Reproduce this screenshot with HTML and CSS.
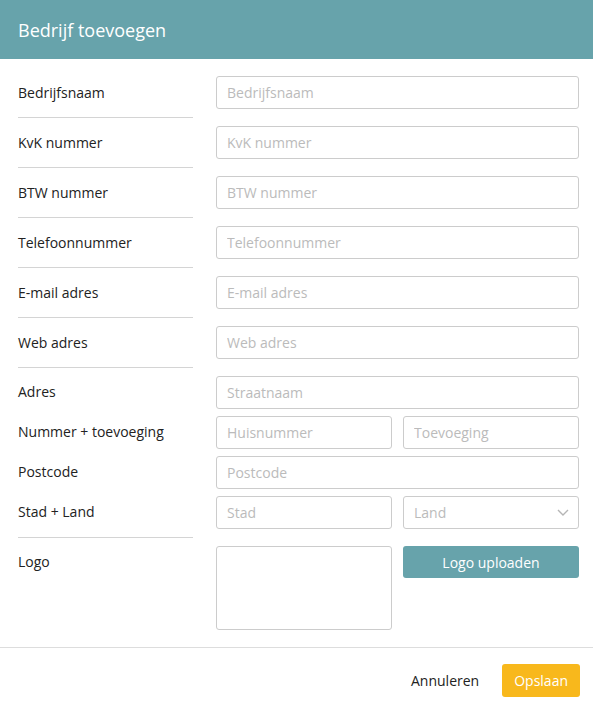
FILE: index.html
```html
<!DOCTYPE html>
<html lang="nl">
<head>
  <meta charset="UTF-8" />
  <meta name="viewport" content="width=device-width, initial-scale=1.0" />
  <title>Bedrijf toevoegen</title>
  <link rel="stylesheet" href="styles.css">
</head>
<body>

  <div class="modal">
    <!-- Header -->
    <div class="modal-header">Bedrijf toevoegen</div>

    <!-- Form -->
    <form class="modal-body">
      <div class="form-row">
        <label class="form-label">Bedrijfsnaam</label>
        <div class="form-field"><input type="text" placeholder="Bedrijfsnaam"></div>
      </div>
      <div class="form-row">
        <label class="form-label">KvK nummer</label>
        <div class="form-field"><input type="text" placeholder="KvK nummer"></div>
      </div>
      <div class="form-row">
        <label class="form-label">BTW nummer</label>
        <div class="form-field"><input type="text" placeholder="BTW nummer"></div>
      </div>
      <div class="form-row">
        <label class="form-label">Telefoonnummer</label>
        <div class="form-field"><input type="text" placeholder="Telefoonnummer"></div>
      </div>
      <div class="form-row">
        <label class="form-label">E-mail adres</label>
        <div class="form-field"><input type="text" placeholder="E-mail adres"></div>
      </div>
      <div class="form-row">
        <label class="form-label">Web adres</label>
        <div class="form-field"><input type="text" placeholder="Web adres"></div>
      </div>

      <!-- Address block -->
      <div class="form-row">
        <div class="form-label label-stack">
          <span>Adres</span>
          <span>Nummer + toevoeging</span>
          <span>Postcode</span>
          <span>Stad + Land</span>
        </div>
        <div class="form-field field-stack">
          <input type="text" placeholder="Straatnaam">
          <div class="split">
            <input type="text" placeholder="Huisnummer">
            <input type="text" placeholder="Toevoeging">
          </div>
          <input type="text" placeholder="Postcode">
          <div class="split">
            <input type="text" placeholder="Stad">
            <div class="select-wrap">
              <select>
                <option>Land</option>
              </select>
              <svg class="chevron" width="12" height="7" viewBox="0 0 12 7">
                <path d="M1 1l5 5 5-5" fill="none" stroke="#b5b5b5" stroke-width="1.4"/>
              </svg>
            </div>
          </div>
        </div>
      </div>

      <!-- Logo -->
      <div class="form-row no-line">
        <label class="form-label">Logo</label>
        <div class="form-field split">
          <div class="logo-box"></div>
          <div><button type="button" class="btn-upload">Logo uploaden</button></div>
        </div>
      </div>
    </form>

    <!-- Footer -->
    <div class="modal-footer">
      <button type="button" class="btn-cancel">Annuleren</button>
      <button type="button" class="btn-save">Opslaan</button>
    </div>
  </div>

</body>
</html>
```

FILE: styles.css
```css
* {
  margin: 0;
  padding: 0;
  box-sizing: border-box;
  font-family: 'Open Sans', sans-serif;
}
body {
  background: #fff;
  color: #222;
  font-size: 14px;
}
.modal {
  width: 593px;
}
.modal-header {
  background-color: #67a3ab;
  color: #fff;
  height: 59px;
  padding: 0 18px;
  display: flex;
  align-items: center;
  font-size: 18px;
}
.modal-body {
  padding: 9px 14px 9px 18px;
  border-bottom: 1px solid #ddd;
}
.form-row {
  display: grid;
  grid-template-columns: 175px 1fr;
  column-gap: 23px;
}
.form-label {
  padding: 8px 0;
  line-height: 33px;
  border-bottom: 1px solid #d4d4d4;
}
.no-line .form-label {
  border-bottom: none;
  line-height: 32px;
}
.form-field {
  padding: 8px 0;
}
.label-stack,
.field-stack {
  display: flex;
  flex-direction: column;
  gap: 7px;
}
.label-stack span {
  line-height: 32px;
  height: 33px;
}
.split {
  display: grid;
  grid-template-columns: 1fr 1fr;
  gap: 11px;
}
input,
select {
  width: 100%;
  height: 33px;
  border: 1px solid #ccc;
  border-radius: 3px;
  padding: 0 10px;
  font-size: 14px;
  color: #222;
  background: #fff;
  outline: none;
}
input::placeholder {
  color: #bbb;
}
.select-wrap {
  position: relative;
}
select {
  appearance: none;
  color: #bbb;
}
.chevron {
  position: absolute;
  right: 10px;
  top: 13px;
}
.logo-box {
  height: 84px;
  border: 1px solid #ccc;
  border-radius: 3px;
}
.btn-upload {
  width: 100%;
  height: 32px;
  border: none;
  border-radius: 3px;
  background-color: #67a3ab;
  color: #fff;
  font-size: 14px;
}
.modal-footer {
  display: flex;
  justify-content: flex-end;
  align-items: center;
  gap: 11px;
  padding: 16px 13px;
}
.btn-cancel {
  background: none;
  border: none;
  color: #222;
  font-size: 14px;
  padding: 0 12px;
}
.btn-save {
  height: 33px;
  padding: 0 12px;
  border: none;
  border-radius: 3px;
  background-color: #f8b81c;
  color: #fff;
  font-size: 14px;
}
```
